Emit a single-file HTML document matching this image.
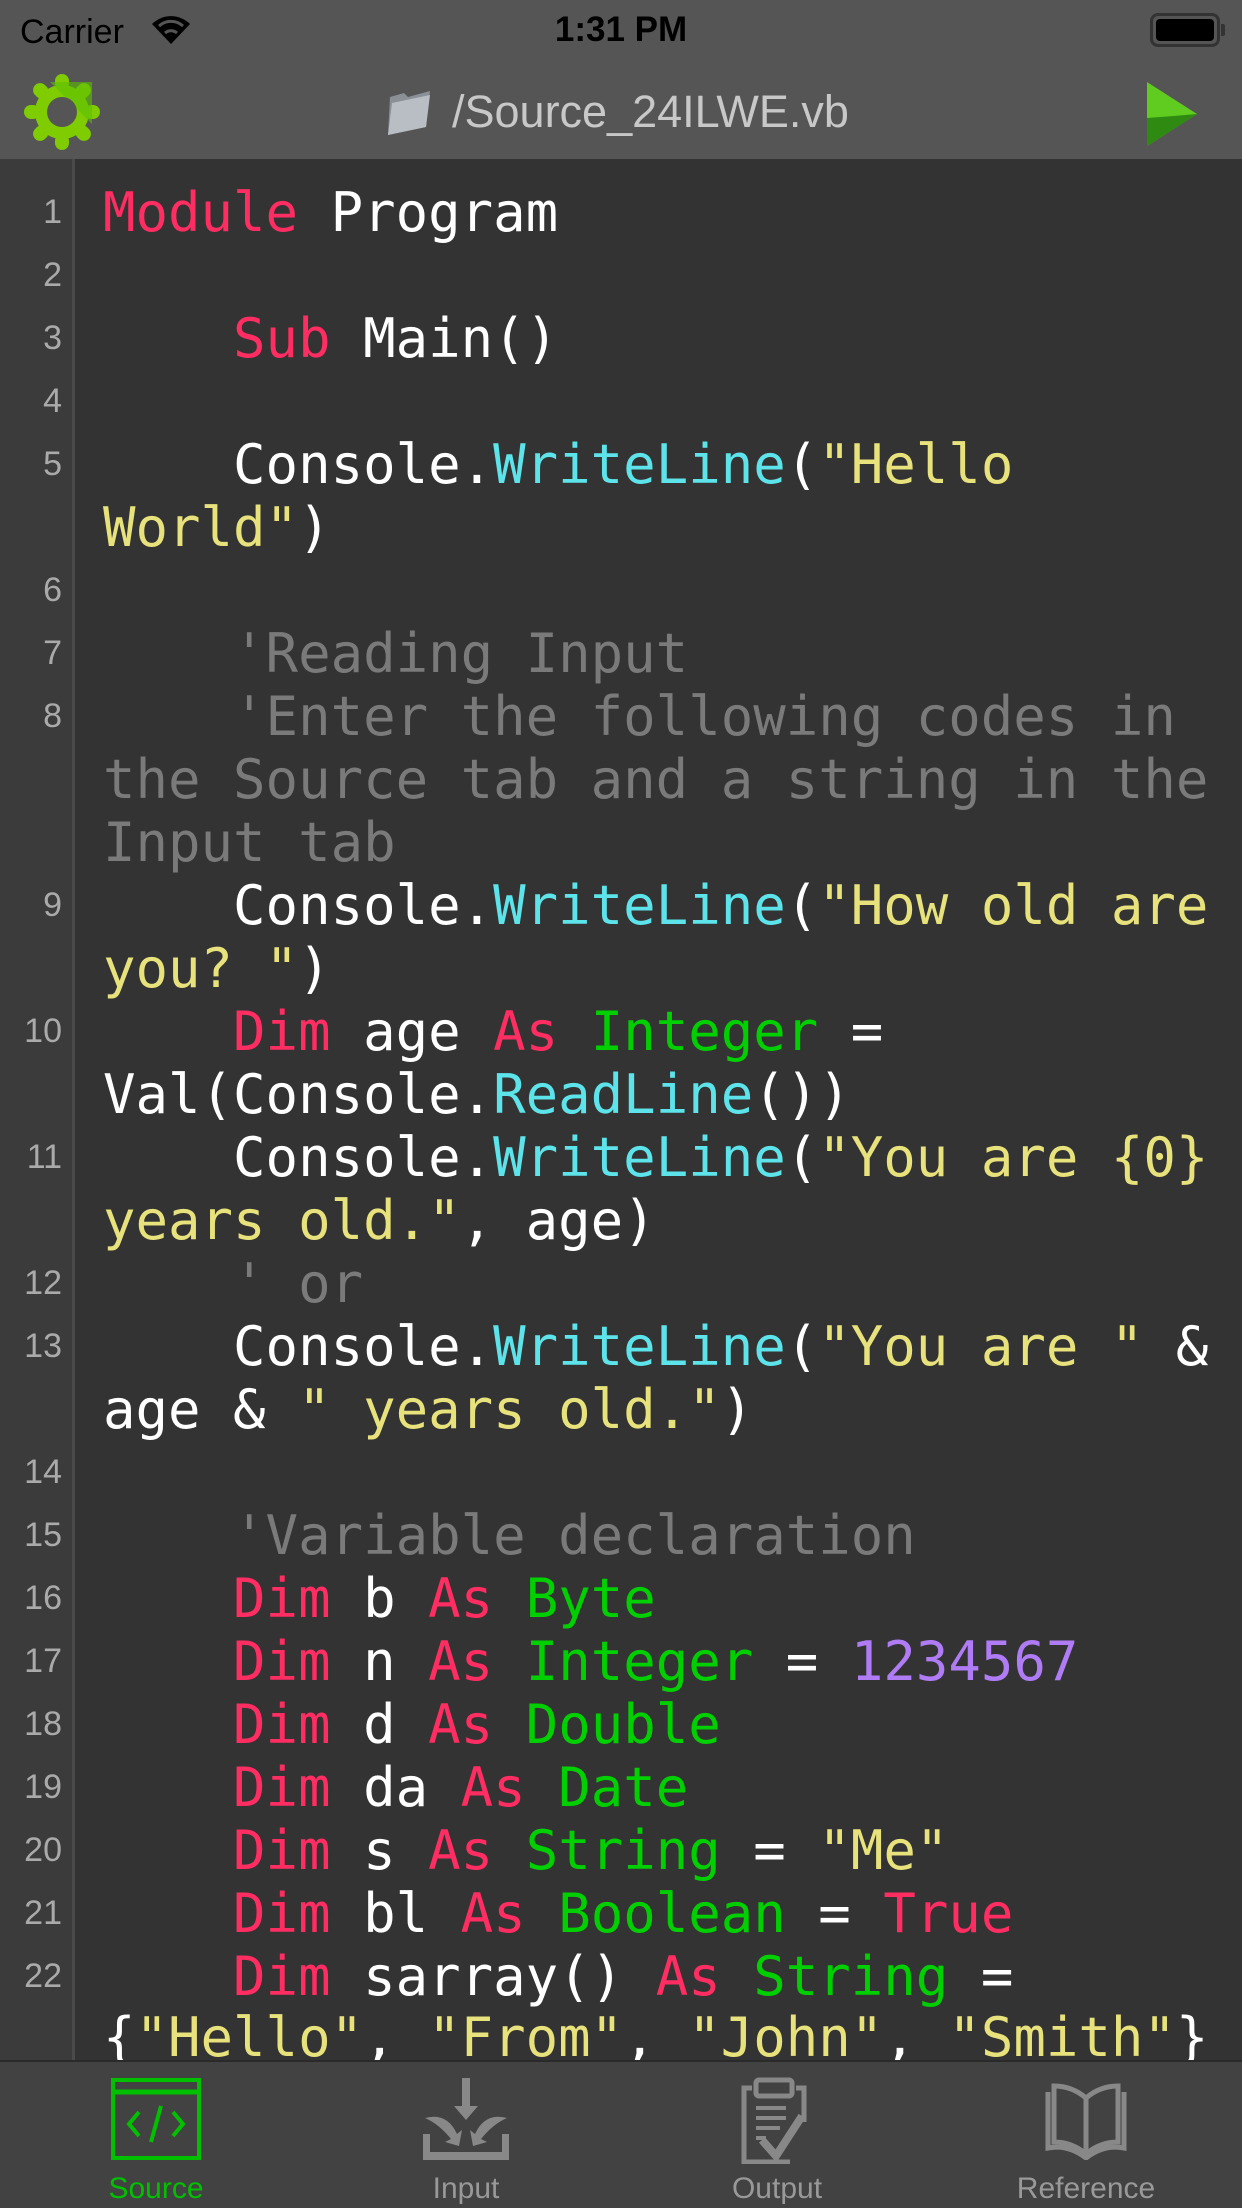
<!DOCTYPE html>
<html><head><meta charset="utf-8">
<style>
*{margin:0;padding:0;box-sizing:border-box}
body{width:1242px;height:2208px;background:#333;overflow:hidden;position:relative;font-family:"Liberation Sans",sans-serif}
#top{position:absolute;left:0;top:0;width:1242px;height:159px;background:#555}
#editor{position:absolute;left:0;top:159px;width:1242px;height:1901px;background:#333;overflow:hidden}
#gutter{position:absolute;left:0;top:0;width:75px;height:1901px;background:#3b3b3b;border-right:3px solid #4a4a4a}
#rows{position:absolute;left:0;top:-4px;width:1242px;height:1910px}
.r{position:absolute;left:103px;height:63px;line-height:63px;font-family:"DejaVu Sans Mono","Liberation Mono",monospace;font-size:54px;color:#fff;white-space:pre}
.n{position:absolute;left:0;width:62px;text-align:right;height:63px;line-height:63px;font-size:34px;color:#aaa}
.k{color:#ff2d62}.c{color:#5de3ea}.s{color:#e8e27c}.g{color:#00d000}.m{color:#7a7a7a}.p{color:#b07cf5}
#tab{position:absolute;left:0;top:2060px;width:1242px;height:148px;background:#424242;border-top:2px solid #2a2a2a}
.tl{position:absolute;top:110px;width:200px;margin-left:-100px;text-align:center;font-size:30px;color:#999;line-height:34px}
</style></head><body>
<div id="top">
<div style="position:absolute;left:20px;top:12px;font-size:34px;color:#000;line-height:40px">Carrier</div>
<svg style="position:absolute;left:150px;top:14px" width="42" height="32" viewBox="0 0 42 32"><path d="M21 30 L2 10 A27 27 0 0 1 40 10 Z" fill="#000"/><path d="M9 12 A18 18 0 0 1 33 12" stroke="#555" stroke-width="3" fill="none"/><path d="M15 19 A9 9 0 0 1 27 19" stroke="#555" stroke-width="3" fill="none"/></svg>
<div style="position:absolute;left:0;width:1242px;top:10px;text-align:center;font-size:35px;font-weight:bold;color:#000;line-height:40px">1:31 PM</div>
<div style="position:absolute;left:1150px;top:13px;width:70px;height:34px;border:3px solid #333;border-radius:8px;padding:3px"><div style="width:100%;height:100%;background:#000;border-radius:4px"></div></div>
<div style="position:absolute;left:1221px;top:24px;width:4px;height:12px;background:#333;border-radius:0 2px 2px 0"></div>
<svg style="position:absolute;left:22px;top:72px" width="80" height="80" viewBox="-40 -40 80 80">
<g fill="#7fcc00"><circle r="27"/>
<g id="t"><rect x="-7" y="-38" width="14" height="16" rx="7"/></g>
<use href="#t" transform="rotate(45)"/><use href="#t" transform="rotate(90)"/><use href="#t" transform="rotate(135)"/><use href="#t" transform="rotate(180)"/><use href="#t" transform="rotate(225)"/><use href="#t" transform="rotate(270)"/><use href="#t" transform="rotate(315)"/></g>
<path d="M-12 -30 L30 12 L30 -30 Z" fill="#5cbf00" opacity=".6"/>
<circle r="15" fill="#555"/></svg>
<svg style="position:absolute;left:384px;top:87px" width="50" height="50" viewBox="0 0 50 50"><path d="M6 10 L20 6 L24 10 L46 4 L42 40 L4 48 Z" fill="#8a9096"/><path d="M8 16 L46 8 L42 40 L4 48 Z" fill="#b8bec4"/></svg>
<div style="position:absolute;left:452px;top:86px;font-size:45px;color:#c8c8c8;line-height:52px">/Source_24ILWE.vb</div>
<svg style="position:absolute;left:1145px;top:82px" width="54" height="64" viewBox="0 0 54 64"><path d="M2 0 L52 32 L2 64 Z" fill="#5fcc1f"/><path d="M2 36 Q30 34 52 32 L2 64 Z" fill="#2e8a10"/></svg>
</div>
<div id="editor">
<div id="gutter"></div>
<div id="rows">
<div class="n" style="top:26px">1</div>
<div class="n" style="top:89px">2</div>
<div class="n" style="top:152px">3</div>
<div class="n" style="top:215px">4</div>
<div class="n" style="top:278px">5</div>
<div class="n" style="top:404px">6</div>
<div class="n" style="top:467px">7</div>
<div class="n" style="top:530px">8</div>
<div class="n" style="top:719px">9</div>
<div class="n" style="top:845px">10</div>
<div class="n" style="top:971px">11</div>
<div class="n" style="top:1097px">12</div>
<div class="n" style="top:1160px">13</div>
<div class="n" style="top:1286px">14</div>
<div class="n" style="top:1349px">15</div>
<div class="n" style="top:1412px">16</div>
<div class="n" style="top:1475px">17</div>
<div class="n" style="top:1538px">18</div>
<div class="n" style="top:1601px">19</div>
<div class="n" style="top:1664px">20</div>
<div class="n" style="top:1727px">21</div>
<div class="n" style="top:1790px">22</div>
<div class="r" style="top:26px"><span class="k">Module</span> Program</div>
<div class="r" style="top:152px">    <span class="k">Sub</span> Main()</div>
<div class="r" style="top:278px">    Console.<span class="c">WriteLine</span>(<span class="s">"Hello</span></div>
<div class="r" style="top:341px"><span class="s">World"</span>)</div>
<div class="r m" style="top:467px">    'Reading Input</div>
<div class="r m" style="top:530px">    'Enter the following codes in</div>
<div class="r m" style="top:593px">the Source tab and a string in the</div>
<div class="r m" style="top:656px">Input tab</div>
<div class="r" style="top:719px">    Console.<span class="c">WriteLine</span>(<span class="s">"How old are</span></div>
<div class="r" style="top:782px"><span class="s">you? "</span>)</div>
<div class="r" style="top:845px">    <span class="k">Dim</span> age <span class="k">As</span> <span class="g">Integer</span> =</div>
<div class="r" style="top:908px">Val(Console.<span class="c">ReadLine</span>())</div>
<div class="r" style="top:971px">    Console.<span class="c">WriteLine</span>(<span class="s">"You are {0}</span></div>
<div class="r" style="top:1034px"><span class="s">years old."</span>, age)</div>
<div class="r m" style="top:1097px">    ' or</div>
<div class="r" style="top:1160px">    Console.<span class="c">WriteLine</span>(<span class="s">"You are "</span> &amp;</div>
<div class="r" style="top:1223px">age &amp; <span class="s">" years old."</span>)</div>
<div class="r m" style="top:1349px">    'Variable declaration</div>
<div class="r" style="top:1412px">    <span class="k">Dim</span> b <span class="k">As</span> <span class="g">Byte</span></div>
<div class="r" style="top:1475px">    <span class="k">Dim</span> n <span class="k">As</span> <span class="g">Integer</span> = <span class="p">1234567</span></div>
<div class="r" style="top:1538px">    <span class="k">Dim</span> d <span class="k">As</span> <span class="g">Double</span></div>
<div class="r" style="top:1601px">    <span class="k">Dim</span> da <span class="k">As</span> <span class="g">Date</span></div>
<div class="r" style="top:1664px">    <span class="k">Dim</span> s <span class="k">As</span> <span class="g">String</span> = <span class="s">"Me"</span></div>
<div class="r" style="top:1727px">    <span class="k">Dim</span> bl <span class="k">As</span> <span class="g">Boolean</span> = <span class="k">True</span></div>
<div class="r" style="top:1790px">    <span class="k">Dim</span> sarray() <span class="k">As</span> <span class="g">String</span> =</div>
<div class="r" style="top:1851px">{<span class="s">"Hello"</span>, <span class="s">"From"</span>, <span class="s">"John"</span>, <span class="s">"Smith"</span>}</div>
</div>
</div>
<div id="tab">
<svg style="position:absolute;left:111px;top:16px" width="90" height="82" viewBox="0 0 90 82"><rect x="2" y="2" width="86" height="78" fill="none" stroke="#00c000" stroke-width="4"/><line x1="2" y1="14" x2="88" y2="14" stroke="#00c000" stroke-width="5"/><path d="M28 34 L18 46 L28 58 M62 34 L72 46 L62 58 M50 28 L40 64" stroke="#00c000" stroke-width="4" fill="none"/></svg>
<div class="tl" style="left:156px;color:#00c000">Source</div>
<svg style="position:absolute;left:421px;top:16px" width="90" height="84" viewBox="0 0 90 84"><path d="M41 0 h8 v28 h8 l-12 14 l-12 -14 h8 Z" fill="#888"/><path d="M2 56 v26 h86 v-26 h-7 v18 h-72 v-18 Z" fill="#888"/><path d="M4 40 Q26 34 36 56 l5 -4 l-3 16 l-14 -4 l6 -3 Q18 46 4 40Z M86 40 Q64 34 54 56 l-5 -4 l3 16 l14 -4 l-6 -3 Q72 46 86 40Z" fill="#888"/></svg>
<div class="tl" style="left:466px">Input</div>
<svg style="position:absolute;left:738px;top:14px" width="80" height="88" viewBox="0 0 80 88"><path d="M14 12 h-8 v74 h46 M58 12 h8 v34" fill="none" stroke="#888" stroke-width="5"/><rect x="18" y="4" width="36" height="16" rx="3" fill="none" stroke="#888" stroke-width="5"/><path d="M18 32 h30 M18 42 h30 M18 52 h24 M18 62 h10" stroke="#888" stroke-width="4"/><path d="M24 64 l14 16 l26 -40" fill="none" stroke="#888" stroke-width="8"/></svg>
<div class="tl" style="left:777px">Output</div>
<svg style="position:absolute;left:1040px;top:18px" width="92" height="80" viewBox="0 0 92 80"><path d="M8 12 v56 q20 -4 38 10 q18 -14 38 -10 v-56" fill="none" stroke="#888" stroke-width="5"/><path d="M14 6 q18 0 32 12 q14 -12 32 -12 v56 q-18 0 -32 12 q-14 -12 -32 -12 Z M46 18 v56" fill="none" stroke="#888" stroke-width="5"/></svg>
<div class="tl" style="left:1086px">Reference</div>
</div>
</body></html>
